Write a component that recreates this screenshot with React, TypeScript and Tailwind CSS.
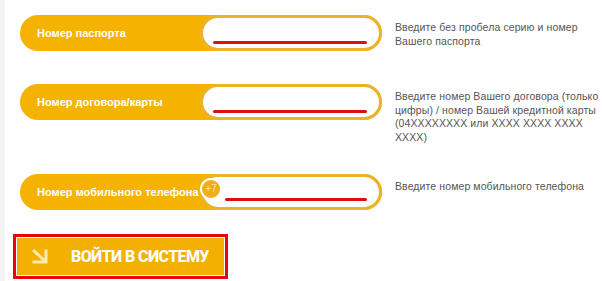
import React from 'react';

const label = "text-white font-bold text-[11px] whitespace-nowrap";
const hint = "text-[#555] text-[10.5px] leading-[13.5px] tracking-[0.1px] pt-[6px] whitespace-nowrap";

const Field: React.FC<{ title: string; phone?: boolean }> = ({ title, phone }) => (
  <div className="w-[362px] h-[36px] rounded-full bg-[#f5b300] flex items-center shrink-0">
    <div className={`flex-1 pl-[17px] ${label}`}>{title}</div>
    <div className="w-[182px] h-[36px] rounded-full border-[3px] border-[#ebb32a] bg-white flex items-center pr-[12px] shrink-0">
      {phone ? (
        <>
          <div className="-ml-[3px] mb-[6px] w-[22px] h-[22px] min-w-[22px] rounded-full bg-[#f2ae12] border-2 border-white flex items-center justify-center">
            <span className="text-[#fde6a6] text-[10px] leading-none">+7</span>
          </div>
          <div className="ml-[3px] self-end mb-[6px] flex-1 h-[3px] rounded-full bg-[#dd1010]" />
        </>
      ) : (
        <div className="ml-[10px] self-end mb-[4px] flex-1 h-[3px] rounded-full bg-[#dd1010]" />
      )}
    </div>
  </div>
);

export default function App() {
  return (
    <div className="flex w-[602px] h-[281px] bg-white overflow-hidden" style={{ fontFamily: '"Liberation Sans", Arial, sans-serif' }}>
      <div className="w-[5px] bg-[#f3f3f3] shrink-0" />
      <div className="flex-1 flex flex-col">
        <div className="flex h-[36px] mt-[15px] ml-[15px] gap-[13px]">
          <Field title="Номер паспорта" />
          <div className={hint}>
            Введите без пробела серию и номер<br />Вашего паспорта
          </div>
        </div>
        <div className="flex h-[36px] mt-[33px] ml-[15px] gap-[13px]">
          <Field title="Номер договора/карты" />
          <div className={hint}>
            Введите номер Вашего договора (только<br />цифры) / номер Вашей кредитной карты<br />(04XXXXXXXX или XXXX XXXX XXXX<br />XXXX)
          </div>
        </div>
        <div className="flex h-[36px] mt-[54px] ml-[15px] gap-[13px]">
          <Field title="Номер мобильного телефона" phone />
          <div className={hint}>Введите номер мобильного телефона</div>
        </div>
        <div className="mt-[24px] ml-[8px] w-[215px] h-[45px] border-[3px] border-[#e30613] p-[1px] shrink-0">
          <button className="w-full h-full bg-[#f4b000] flex items-center pl-[14px]">
            <svg width="18" height="15" viewBox="0 0 18 15" fill="none" stroke="#fdeab0" strokeWidth="3">
              <path d="M2 1l12 11" />
              <path d="M15 2v11H3" strokeLinecap="square" />
            </svg>
            <span className="ml-[22px] text-white font-extrabold text-[16px] tracking-[-0.6px]" style={{ fontFamily: 'Roboto, "Liberation Sans", sans-serif' }}>
              ВОЙТИ В СИСТЕМУ
            </span>
          </button>
        </div>
      </div>
    </div>
  );
}
